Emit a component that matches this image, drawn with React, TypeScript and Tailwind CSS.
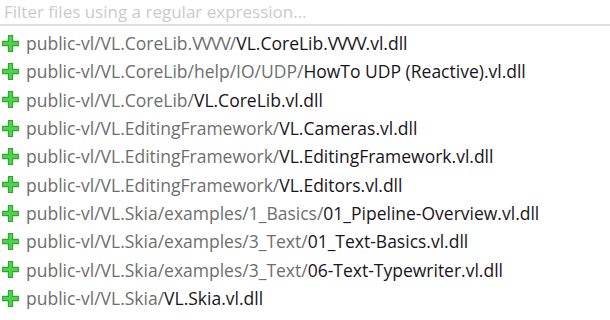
const files: [string, string][] = [
  ["public-vl/VL.CoreLib.VVVV/", "VL.CoreLib.VVVV.vl.dll"],
  ["public-vl/VL.CoreLib/help/IO/UDP/", "HowTo UDP (Reactive).vl.dll"],
  ["public-vl/VL.CoreLib/", "VL.CoreLib.vl.dll"],
  ["public-vl/VL.EditingFramework/", "VL.Cameras.vl.dll"],
  ["public-vl/VL.EditingFramework/", "VL.EditingFramework.vl.dll"],
  ["public-vl/VL.EditingFramework/", "VL.Editors.vl.dll"],
  ["public-vl/VL.Skia/examples/1_Basics/", "01_Pipeline-Overview.vl.dll"],
  ["public-vl/VL.Skia/examples/3_Text/", "01_Text-Basics.vl.dll"],
  ["public-vl/VL.Skia/examples/3_Text/", "06-Text-Typewriter.vl.dll"],
  ["public-vl/VL.Skia/", "VL.Skia.vl.dll"],
];

// "VVVV" sits tighter in the UI font than in Open Sans
function Label({ text }: { text: string }) {
  const parts = text.split("VVVV");
  return (
    <>
      {parts.map((p, i) => (
        <span key={i}>
          {p}
          {i < parts.length - 1 && <span className="tracking-[-1px]">VVVV</span>}
        </span>
      ))}
    </>
  );
}

function PlusIcon() {
  return (
    <svg width="19" height="19" viewBox="0 0 18 18" className="shrink-0">
      <path d="M6.5 1h5v5.5h5.5v5h-5.5v5.5h-5v-5.5h-5.5v-5h5.5z" fill="#2aa82a" />
      <path d="M7.5 2h3v5.5h5.5v3h-5.5v5.5h-3v-5.5h-5.5v-3h5.5z" fill="#4fd04f" />
    </svg>
  );
}

export default function App() {
  return (
    <div className="w-[610px] h-[320px] bg-white overflow-hidden font-['Open_Sans',sans-serif]">
      <div className="h-[26px] border-b-2 border-[#dedede] flex items-center px-[4px]">
        <input
          className="w-full outline-none text-[17px] bg-transparent placeholder:text-[#cbcbcb]"
          placeholder="Filter files using a regular expression..."
        />
      </div>
      <div className="flex flex-col pt-[3px]">
        {files.map(([dir, name]) => (
          <div key={dir + name} className="h-[28.33px] flex items-center gap-[6px] pl-[1px]">
            <PlusIcon />
            <span className="text-[17.5px] whitespace-nowrap">
              <span className="text-[#6e6e6e]"><Label text={dir} /></span>
              <span className="text-[#1b1420]"><Label text={name} /></span>
            </span>
          </div>
        ))}
      </div>
    </div>
  );
}
